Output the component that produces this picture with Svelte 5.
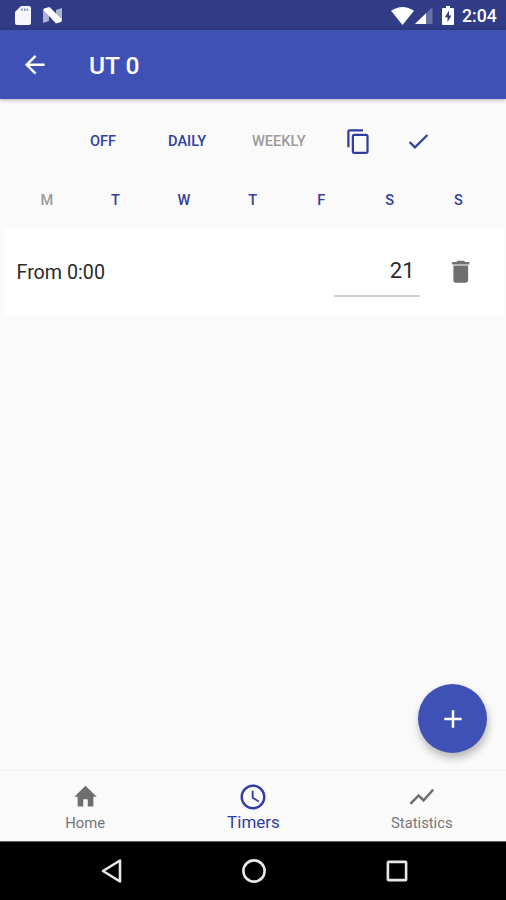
<script>
	const modes = [
		{label: 'OFF', cls: 'off'},
		{label: 'DAILY', cls: 'daily'},
		{label: 'WEEKLY', cls: 'weekly', disabled: true}
	];
	const days = ['M', 'T', 'W', 'T', 'F', 'S', 'S'];

	let selectedDay = $state(0);
	let timers = $state([{id: 1, from: '0:00', value: 21}]);

	function removeTimer(id) {
		timers = timers.filter((t) => t.id !== id);
	}

	function addTimer() {
		timers.push({id: Date.now(), from: '0:00', value: 21});
	}
</script>

<main>
	<div class="status">
		<svg class="sd" width="16" height="19" viewBox="0 0 16 19">
			<path fill="#f5f5fa" d="M6 0h8a2 2 0 0 1 2 2v15a2 2 0 0 1-2 2H2a2 2 0 0 1-2-2V6z"/>
			<path stroke="#7f86b6" stroke-width="1.4" d="M7 2.500v2.500M9.700 2.500v2.500M12.400 2.500v2.500"/>
		</svg>
		<svg class="nougat" width="20" height="17" viewBox="0 0 20 17">
			<path fill="#adb2d3" d="M0 2l6-1v13l-6 2zM13 3l6-2v13l-6 2z"/>
			<path fill="#fff" d="M1 1.500 6.500 0 19 12.500 18 15l-5 1.500L1 3.500z"/>
		</svg>
		<span class="grow"></span>
		<svg class="wifi" width="23" height="18" viewBox="0 0 23 18">
			<path fill="#fff" d="M11.500 18 0 3.800Q11.500-3.800 23 3.800z"/>
		</svg>
		<svg class="signal" width="18" height="17" viewBox="0 0 18 17">
			<path fill="#6670aa" d="M17.500 0v17H0z"/>
			<path fill="#fff" d="M11 6.300V17H0z"/>
		</svg>
		<svg class="battery" width="12" height="19" viewBox="0 0 12 19">
			<path fill="#fff" d="M4 0h4v2h3q1 0 1 1v15q0 1-1 1H1q-1 0-1-1V3q0-1 1-1h3z"/>
			<path fill="#303c86" d="M7 4.500 2.800 11.300h2.700V16l4-6.500H7z"/>
		</svg>
		<span class="clock">2:04</span>
	</div>

	<header>
		<button aria-label="Back">
			<svg width="29.500" height="29.500" viewBox="0 0 24 24" fill="#fff">
				<path d="M20 11H7.830l5.590-5.590L12 4l-8 8 8 8 1.410-1.410L7.830 13H20v-2z"/>
			</svg>
		</button>
		<h1>UT 0</h1>
	</header>

	<section class="content">
		<div class="modes">
			{#each modes as mode}
				<button class="mode {mode.cls}" disabled={mode.disabled}>{mode.label}</button>
			{/each}
			<button class="copy" aria-label="Copy">
				<svg width="27" height="27" viewBox="0 0 24 24" fill="#303f9f">
					<path d="M16 1H4c-1.100 0-2 .9-2 2v14h2V3h12V1zm3 4H8c-1.100 0-2 .9-2 2v14c0 1.100.9 2 2 2h11c1.100 0 2-.9 2-2V7c0-1.100-.9-2-2-2zm0 16H8V7h11v14z"/>
				</svg>
			</button>
			<button class="check" aria-label="Apply">
				<svg width="26.500" height="26.500" viewBox="0 0 24 24" fill="#303f9f">
					<path d="M9 16.170 4.830 12l-1.420 1.410L9 19 21 7l-1.410-1.410z"/>
				</svg>
			</button>
		</div>

		<div class="days">
			{#each days as day, i}
				<button disabled={i === selectedDay} onclick={() => (selectedDay = i)}>{day}</button>
			{/each}
		</div>

		{#each timers as timer (timer.id)}
			<div class="card">
				<span class="from">From {timer.from}</span>
				<span class="value">{timer.value}</span>
				<button aria-label="Delete" onclick={() => removeTimer(timer.id)}>
					<svg width="29.500" height="29.500" viewBox="0 0 24 24" fill="#6f6f6f">
						<path d="M6 19c0 1.100.9 2 2 2h8c1.100 0 2-.9 2-2V7H6v12zM19 4h-3.500l-1-1h-5l-1 1H5v2h14V4z"/>
					</svg>
				</button>
			</div>
		{/each}

		<button class="fab" aria-label="Add" onclick={addTimer}>
			<svg width="30" height="30" viewBox="0 0 24 24" fill="#fff">
				<path d="M19 13h-6v6h-2v-6H5v-2h6V5h2v6h6v2z"/>
			</svg>
		</button>
	</section>

	<nav>
		<a href="#home">
			<svg width="27" height="29.500" viewBox="0 0 24 24" preserveAspectRatio="none" fill="#6f6f6f">
				<path d="M10 20v-6h4v6h5v-8h3L12 3 2 12h3v8z"/>
			</svg>
			<span>Home</span>
		</a>
		<a href="#timers" class="active">
			<svg width="30" height="30" viewBox="0 0 24 24" fill="#303f9f">
				<path d="M11.990 2C6.470 2 2 6.480 2 12s4.470 10 9.990 10C17.520 22 22 17.520 22 12S17.520 2 11.990 2zM12 20c-4.420 0-8-3.580-8-8s3.580-8 8-8 8 3.580 8 8-3.580 8-8 8zm.5-13H11v6l5.250 3.150.75-1.230-4.500-2.670z"/>
			</svg>
			<span>Timers</span>
		</a>
		<a href="#statistics">
			<svg width="29.500" height="29.500" viewBox="0 0 24 24" fill="#6f6f6f">
				<path d="M3.500 18.490l6-6.010 4 4L22 6.920l-1.410-1.410-7.090 7.970-4-4L2 16.990z"/>
			</svg>
			<span>Statistics</span>
		</a>
	</nav>

	<div class="system">
		<svg width="24" height="28" viewBox="0 0 24 28">
			<path d="M20 3.500v21L3 14z"/>
		</svg>
		<svg width="28" height="28" viewBox="0 0 28 28">
			<circle cx="14" cy="14" r="10.600"/>
		</svg>
		<svg width="28" height="28" viewBox="0 0 28 28">
			<rect x="4.900" y="4.900" width="18.200" height="18.200" rx="0.600"/>
		</svg>
	</div>
</main>

<style>
	:global(body) {
		margin: 0;
	}

	main {
		width: 506px;
		height: 900px;
		display: flex;
		flex-direction: column;
		background: #fafafa;
		font-family: Roboto, sans-serif;
		overflow: hidden;
	}

	button {
		padding: 0;
		border: none;
		background: none;
		font: inherit;
		color: inherit;
	}

	svg {
		display: block;
		flex: none;
	}

	.status {
		height: 30px;
		flex: none;
		display: flex;
		align-items: center;
		box-sizing: border-box;
		padding: 1px 9px 0 15px;
		background: #303c86;
		color: #fff;
	}

	.nougat {
		margin-left: 12px;
	}

	.grow {
		flex: 1;
	}

	.signal {
		margin-left: 1px;
	}

	.battery {
		margin-left: 9px;
	}

	.clock {
		width: 35px;
		margin-left: 8px;
		font-size: 17.600px;
		font-weight: 500;
		white-space: nowrap;
	}

	header {
		height: 69px;
		flex: none;
		display: flex;
		align-items: center;
		padding-left: 20px;
		background: #3f51b5;
		color: #fff;
		box-shadow: 0 1px 4px rgba(0, 0, 0, .3);
		z-index: 1;
	}

	h1 {
		margin: 1px 0 0 39.500px;
		font-size: 24.600px;
		font-weight: 500;
	}

	.content {
		flex: 1;
		position: relative;
	}

	.modes {
		height: 84px;
		display: flex;
		align-items: center;
		padding-left: 90px;
		color: #303f9f;
		font-size: 14.600px;
		font-weight: 500;
	}

	.mode {
		text-align: left;
		white-space: nowrap;
	}

	.off {
		width: 78px;
	}

	.daily {
		width: 84px;
	}

	.weekly {
		width: 92.500px;
	}

	.modes button:disabled,
	.days button:disabled {
		color: #9b9b9b;
	}

	.copy {
		width: 60px;
	}

	.days {
		height: 34px;
		display: grid;
		grid-template-columns: repeat(7, 68.600px);
		align-items: center;
		padding-left: 12.500px;
		color: #303f9f;
		font-size: 14.600px;
		font-weight: 500;
	}

	.card {
		height: 88px;
		display: flex;
		align-items: center;
		box-sizing: border-box;
		margin: 11px 2px 0 4px;
		padding: 0 28.500px 0 12.500px;
		background: #fff;
		color: #2a2a2a;
	}

	.from {
		flex: 1;
		font-size: 19.700px;
	}

	.value {
		width: 86px;
		height: 50px;
		margin: 0 26.500px 0 0;
		padding-right: 5px;
		box-sizing: border-box;
		border-bottom: 2px solid #d0d0d0;
		font-size: 22px;
		line-height: 47px;
		text-align: right;
	}

	.fab {
		position: absolute;
		right: 19px;
		bottom: 17px;
		width: 69px;
		height: 69px;
		display: flex;
		align-items: center;
		justify-content: center;
		border-radius: 50%;
		background: #3f51b5;
		box-shadow: 1px 5px 8px rgba(0, 0, 0, .28);
	}

	nav {
		height: 71px;
		flex: none;
		display: grid;
		grid-template-columns: repeat(3, 1fr);
		box-sizing: border-box;
		padding-left: 1px;
		border-top: 1px solid #efefef;
	}

	nav a {
		display: flex;
		flex-direction: column;
		align-items: center;
		padding-top: 11px;
		color: #757575;
		font-size: 14.800px;
		line-height: 23px;
		text-decoration: none;
	}

	nav a.active {
		color: #303f9f;
		font-size: 17px;
		line-height: 20px;
	}

	.system {
		height: 59px;
		flex: none;
		display: flex;
		align-items: center;
		box-sizing: border-box;
		padding-left: 99.500px;
		border-top: 1px solid #666;
		background: #000;
	}

	.system svg {
		fill: none;
		stroke: #e8e8e8;
		stroke-width: 2.600;
		stroke-linejoin: round;
	}

	.system svg + svg {
		margin-left: 115px;
	}

	.system svg + svg:nth-child(2) {
		margin-left: 116px;
	}
</style>
